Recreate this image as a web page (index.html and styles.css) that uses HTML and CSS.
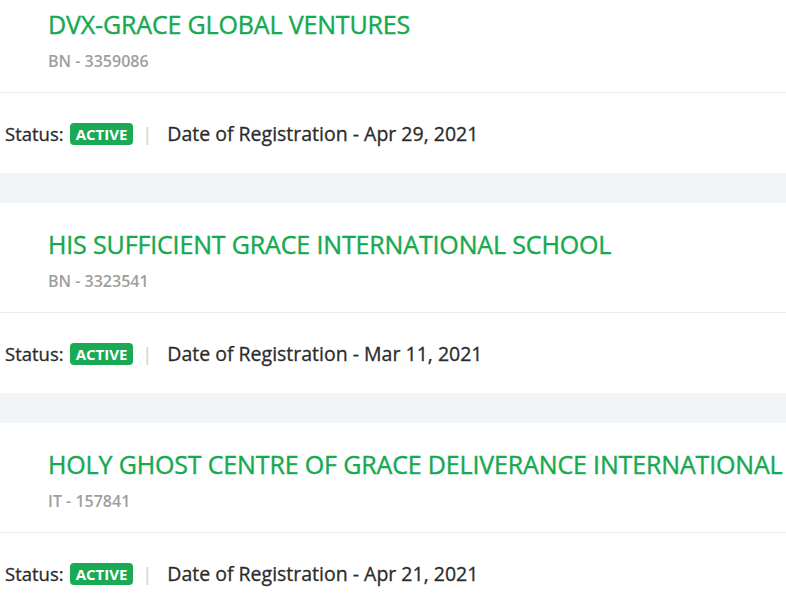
FILE: index.html
```html
<!DOCTYPE html>
<html>
<head>
<meta charset="utf-8">
<link rel="stylesheet" href="styles.css">
</head>
<body>
<div class="list">
  <div class="card">
    <div class="head">
      <h2 class="name">DVX-GRACE GLOBAL VENTURES</h2>
      <div class="num">BN - 3359086</div>
    </div>
    <div class="foot">
      <span class="label">Status:</span>
      <span class="badge">ACTIVE</span>
      <span class="sep">|</span>
      <span class="date">Date of Registration - Apr 29, 2021</span>
    </div>
  </div>
  <div class="card">
    <div class="head">
      <h2 class="name">HIS SUFFICIENT GRACE INTERNATIONAL SCHOOL</h2>
      <div class="num">BN - 3323541</div>
    </div>
    <div class="foot">
      <span class="label">Status:</span>
      <span class="badge">ACTIVE</span>
      <span class="sep">|</span>
      <span class="date">Date of Registration - Mar 11, 2021</span>
    </div>
  </div>
  <div class="card">
    <div class="head">
      <h2 class="name">HOLY GHOST CENTRE OF GRACE DELIVERANCE INTERNATIONAL</h2>
      <div class="num">IT - 157841</div>
    </div>
    <div class="foot">
      <span class="label">Status:</span>
      <span class="badge">ACTIVE</span>
      <span class="sep">|</span>
      <span class="date">Date of Registration - Apr 21, 2021</span>
    </div>
  </div>
</div>
</body>
</html>
```
FILE: styles.css
```css
html, body {
  margin: 0;
  padding: 0;
  background: #ffffff;
  font-family: "Open Sans", "Noto Sans", sans-serif;
  overflow: hidden;
}
.list {
  margin-top: -17px;
  display: flex;
  flex-direction: column;
  gap: 30px;
  background: #f1f4f6;
}
.card {
  background: #ffffff;
  height: 190px;
  display: flex;
  flex-direction: column;
}
.head {
  padding: 27px 0 0 48px;
  height: 110px;
  box-sizing: border-box;
  border-bottom: 1px solid #ececec;
}
.name {
  margin: 0;
  font-size: 25px;
  font-weight: 400;
  color: #16a94f;
  line-height: 28px;
  white-space: nowrap;
  letter-spacing: -0.15px;
  -webkit-text-stroke: 0.4px #16a94f;
}
.num {
  margin-top: 14px;
  font-size: 16px;
  font-weight: 600;
  color: #9e9e9e;
  line-height: 18px;
}
.foot {
  display: flex;
  align-items: center;
  padding: 29px 0 0 5px;
  color: #2b2b2b;
  line-height: 24px;
}
.label {
  font-size: 18.5px;
  -webkit-text-stroke: 0.3px #2b2b2b;
}
.badge {
  margin-left: 6px;
  background: #1aaa55;
  color: #fff;
  font-size: 15px;
  font-weight: 700;
  line-height: 22px;
  padding: 0 6px;
  border-radius: 4px;
}
.sep {
  font-size: 18px;
  color: #cccccc;
  margin: 0 15px 0 9px;
}
.date {
  font-size: 19.5px;
  -webkit-text-stroke: 0.3px #2b2b2b;
}
```
